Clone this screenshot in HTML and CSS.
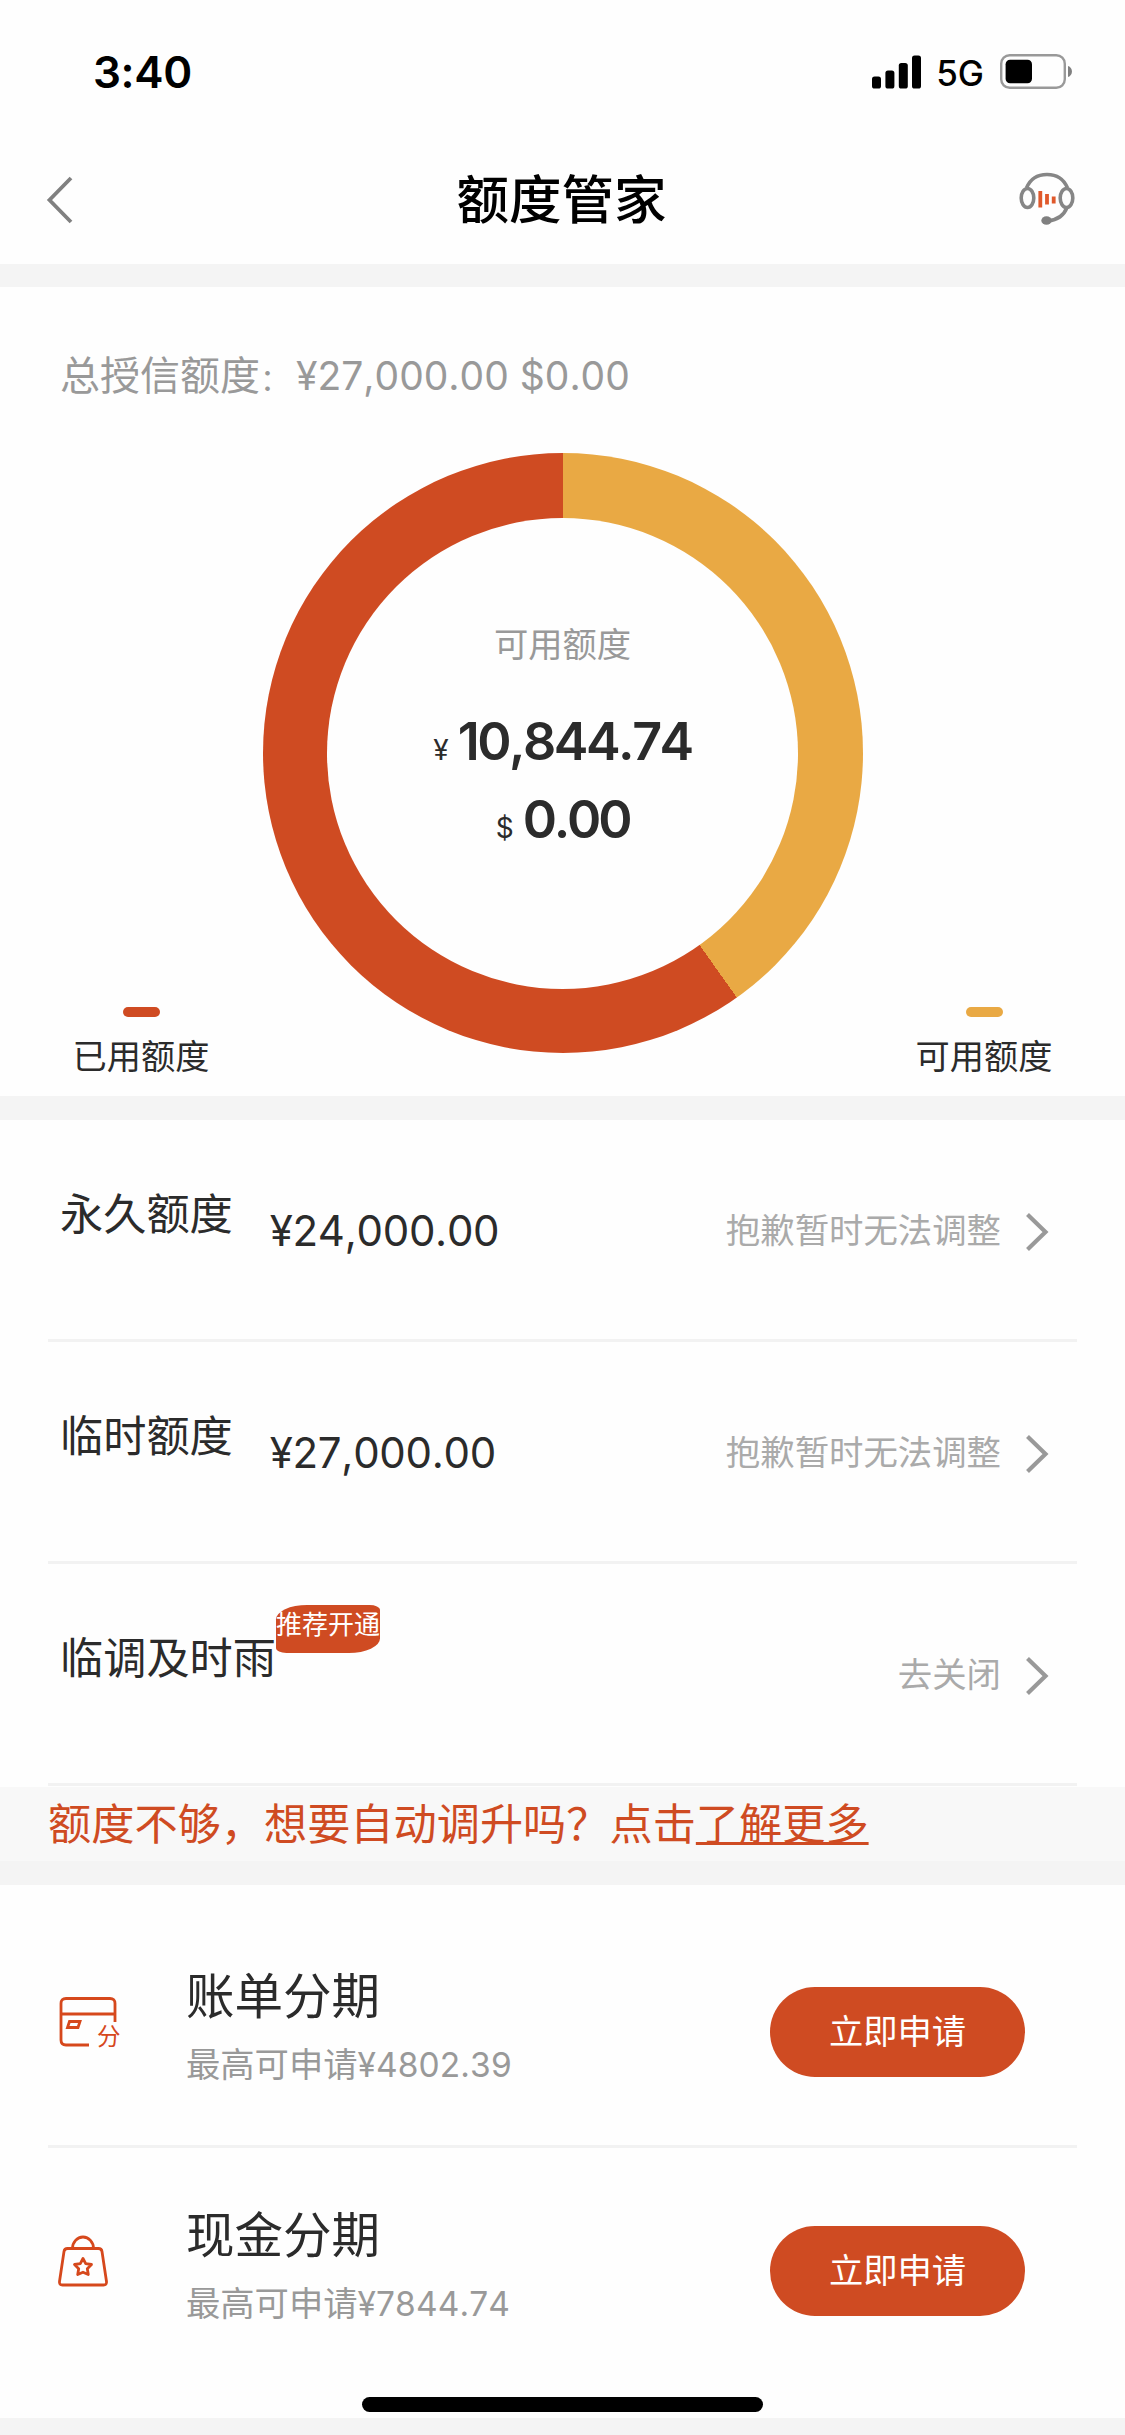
FILE: index.html
```html
<!DOCTYPE html>
<html lang="zh-CN">
<head>
<meta charset="utf-8">
<title>额度管家</title>
<link rel="stylesheet" href="styles.css">
</head>
<body>
<header class="header">
  <div class="status">
    <span class="status-time">3:40</span>
    <div class="status-right">
      <svg class="signal" width="49" height="34" viewBox="0 0 49 34"><rect x="0" y="21.5" width="9" height="12" rx="2.6"/><rect x="13.4" y="15.5" width="9" height="18" rx="2.6"/><rect x="26.8" y="8" width="9" height="25.5" rx="2.6"/><rect x="40" y="0.5" width="9" height="33" rx="2.6"/></svg>
      <span class="status-net">5G</span>
      <svg class="battery" width="73" height="36" viewBox="0 0 73 36"><rect x="1.2" y="1.2" width="63.6" height="32.6" rx="8.5" fill="none" stroke="#999" stroke-width="2.4"/><rect x="5.6" y="5.8" width="26.4" height="23.4" rx="4.5"/><path d="M68 12c5.3 1.6 5.3 9.4 0 11z" fill="#808080"/></svg>
    </div>
  </div>
  <nav class="nav">
    <svg class="nav-back" width="28" height="48" viewBox="0 0 28 48"><path d="M26 2L4.500 24l21.500 22" fill="none" stroke="#808080" stroke-width="3.800"/></svg>
    <h1 class="nav-title">额度管家</h1>
    <svg class="nav-service" width="56" height="54" viewBox="0 0 56 54" fill="none" stroke="#868686" stroke-width="3.600"><path d="M7.500 16C11 7.500 18.500 2.500 28 2.500s17 5 20.500 13.500"/><ellipse cx="8.500" cy="26" rx="6.300" ry="9.500"/><ellipse cx="47.500" cy="26" rx="6.300" ry="9.500"/><path d="M48 35.500C45 43 38 48 29 48.800"/><ellipse cx="27.500" cy="48.500" rx="5.200" ry="4.300" fill="#808080" stroke="none"/><path d="M21.300 19v16.500M28 22v10.500M34.700 24.500v7" stroke="#e0592b" stroke-width="3.800"/></svg>
  </nav>
</header>

<section class="overview">
  <p class="overview-total">总授信额度<span class="overview-colon">：</span><span class="overview-sum">¥27,000.00 $0.00</span></p>
  <div class="overview-chart">
    <div class="legend">
      <i class="legend-mark legend-mark-used"></i>
      <span>已用额度</span>
    </div>
    <div class="donut">
      <div class="donut-hole">
        <span class="donut-label">可用额度</span>
        <p class="amount"><span class="amount-unit">¥</span><b class="amount-value amount-cny">10,844.74</b></p>
        <p class="amount"><span class="amount-unit">$</span><b class="amount-value amount-usd">0.00</b></p>
      </div>
    </div>
    <div class="legend">
      <i class="legend-mark legend-mark-free"></i>
      <span>可用额度</span>
    </div>
  </div>
</section>

<section class="limits">
  <div class="limit">
    <span class="limit-name">永久额度</span>
    <span class="limit-value">¥24,000.00</span>
    <span class="limit-action">抱歉暂时无法调整</span>
    <svg class="chevron" width="24" height="40" viewBox="0 0 24 40"><path d="M2.500 2.500L20.500 20l-18 17.500"/></svg>
  </div>
  <div class="limit">
    <span class="limit-name">临时额度</span>
    <span class="limit-value">¥27,000.00</span>
    <span class="limit-action">抱歉暂时无法调整</span>
    <svg class="chevron" width="24" height="40" viewBox="0 0 24 40"><path d="M2.500 2.500L20.500 20l-18 17.500"/></svg>
  </div>
  <div class="limit">
    <span class="limit-name">临调及时雨<em class="badge">推荐开通</em></span>
    <span class="limit-action">去关闭</span>
    <svg class="chevron" width="24" height="40" viewBox="0 0 24 40"><path d="M2.500 2.500L20.500 20l-18 17.500"/></svg>
  </div>
</section>

<p class="notice">额度不够，想要自动调升吗？点击<a class="notice-link">了解更多</a></p>

<section class="products">
  <article class="product">
    <svg class="product-icon" width="62" height="52" viewBox="0 0 62 52"><path d="M56 26V7.500q0-5-5-5H7q-5 0-5 5v36.500q0 5 5 5h23M2 18h54"/><path d="M10.500 25.500h10.500l-2 6H8.500z"/><text class="product-glyph" x="38" y="48.500">分</text></svg>
    <div class="product-info">
      <h2 class="product-name">账单分期</h2>
      <p class="product-note">最高可申请<span class="product-sum">¥4802.39</span></p>
    </div>
    <button class="apply">立即申请</button>
  </article>
  <article class="product">
    <svg class="product-icon" width="62" height="52" viewBox="0 0 62 52"><path d="M8.500 13.500h31q3 0 3.500 3l4.500 30q.5 3.500-3 3.500h-41q-3.500 0-3-3.500l4.500-30q.5-3 3.500-3z"/><path d="M13.500 13.500a10.500 11.500 0 0 1 21 0"/><path stroke-linejoin="round" d="M24 23.500l2.700 5.200 5.800.8-4.200 4.200 1 5.800-5.300-2.300-5.300 2.300 1-5.800-4.200-4.200 5.800-.8z"/></svg>
    <div class="product-info">
      <h2 class="product-name">现金分期</h2>
      <p class="product-note">最高可申请<span class="product-sum">¥7844.74</span></p>
    </div>
    <button class="apply">立即申请</button>
  </article>
  <div class="home-bar"></div>
</section>
</body>
</html>
```
FILE: styles.css
```css
* {
  box-sizing: border-box;
  margin: 0;
  padding: 0;
}

body {
  background: #f4f4f4;
  color: #2b2b2b;
  font-family: Inter, "Noto Sans CJK SC", sans-serif;
  font-kerning: none;
}

svg {
  display: block;
  flex: none;
  overflow: visible;
}

/* Status bar and navigation */
.header {
  height: 264px;
  background: #fefefe;
  color: #000;
}

.status {
  display: flex;
  justify-content: space-between;
  align-items: center;
  height: 143px;
  padding: 0 52px 0 93px;
}

.status-time {
  font-size: 44px;
  font-weight: 600;
  letter-spacing: -0.4px;
  line-height: 60px;
}

.status-right {
  display: flex;
  align-items: center;
}

.status-net {
  margin: 2px 16px 0 15px;
  font-size: 35px;
  font-weight: 500;
  line-height: 40px;
}

.nav {
  display: flex;
  align-items: center;
  justify-content: space-between;
  height: 113px;
  padding: 0 50px 0 45px;
}

.nav-title {
  padding-left: 31px;
  font-size: 52.500px;
  font-weight: 500;
  line-height: 72px;
}

.nav-service {
  margin-top: -1px;
}

/* Credit overview */
.overview {
  height: 809px;
  margin-top: 23px;
  padding: 61px 60px 0;
  background: #fefefe;
}

.overview-total {
  height: 56px;
  color: #999;
  font-size: 40px;
  line-height: 56px;
  white-space: nowrap;
}

.overview-colon {
  margin-right: 10px;
  font-size: 30px;
}

.overview-sum {
  margin-left: -4px;
  font-size: 39px;
}

.overview-chart {
  display: flex;
  justify-content: space-between;
  height: 626px;
  padding: 49px 0 0;
}

.legend {
  display: flex;
  flex-direction: column;
  align-items: center;
  gap: 16px;
  width: 162px;
  padding-top: 554px;
  font-size: 34.200px;
  line-height: 48px;
}

.legend-mark {
  flex: none;
  width: 37px;
  height: 10px;
  border-radius: 5px;
}

.legend-mark-used {
  background: #cf4b22;
}

.legend-mark-free {
  background: #e9a944;
}

.donut {
  display: grid;
  place-items: center;
  width: 600px;
  height: 600px;
  border-radius: 50%;
  background: conic-gradient(#e9a944 0 144.600deg, #cf4b22 144.600deg);
}

.donut-hole {
  display: flex;
  flex-direction: column;
  align-items: center;
  width: 471px;
  height: 471px;
  padding-top: 103px;
  border-radius: 50%;
  background: #fefefe;
}

.donut-label {
  margin-bottom: 34px;
  color: #999;
  font-size: 34.300px;
  line-height: 48px;
}

.amount {
  display: flex;
  align-items: baseline;
  gap: 9px;
  height: 78px;
  line-height: 78px;
}

.amount-unit {
  font-size: 28px;
}

.amount-value {
  font-size: 52px;
  font-weight: 600;
}

.amount-cny {
  letter-spacing: -2.500px;
}

.amount-usd {
  letter-spacing: -3.200px;
}

/* Limit rows */
.limits {
  height: 667px;
  margin-top: 24px;
  padding: 0 48px;
  background: #fefefe;
}

.limit {
  display: flex;
  align-items: center;
  height: 222px;
  padding: 0 28px 0 12px;
  border-bottom: 3px solid #f2f2f2;
}

.limit-name {
  position: relative;
  margin-bottom: 32px;
  font-size: 43.200px;
  line-height: 60px;
}

.limit-value {
  margin: 2px 0 0 37px;
  font-size: 42px;
  letter-spacing: -0.300px;
  line-height: 60px;
}

.limit-action {
  margin: 3px 24px 0 auto;
  color: #aaa;
  font-size: 34.400px;
  line-height: 48px;
}

.chevron {
  margin-top: 4px;
  fill: none;
  stroke: #999;
  stroke-width: 4.200;
}

.badge {
  position: absolute;
  top: -23px;
  left: 216px;
  width: 104px;
  height: 48px;
  border-radius: 30% 10%;
  background: #cf4b22;
  color: #fff;
  font-size: 26px;
  font-style: normal;
  line-height: 40px;
  white-space: nowrap;
}

.notice {
  height: 74px;
  padding-left: 48px;
  background: #f8f8f8;
  color: #cf4b22;
  font-size: 43.200px;
  line-height: 74px;
}

.notice-link {
  text-decoration: underline;
  text-decoration-thickness: 3px;
  text-decoration-skip-ink: none;
  text-underline-offset: 2px;
}

/* Instalment products */
.products {
  height: 533px;
  margin-top: 24px;
  padding: 21px 48px 0;
  background: #fefefe;
}

.product {
  display: flex;
  align-items: center;
  height: 239px;
  padding: 0 52px 0 11px;
}

.product + .product {
  height: 237px;
  border-top: 3px solid #f2f2f2;
}

.product-icon {
  margin-top: -8px;
  fill: none;
  stroke: #d6481c;
  stroke-width: 2.800;
}

.product-glyph {
  fill: #d6481c;
  stroke: none;
  font-size: 23.500px;
}

.product-info {
  flex: 1;
  padding-left: 65px;
}

.product-name {
  font-size: 48.500px;
  font-weight: 400;
  line-height: 68px;
}

.product-note {
  margin-top: 10px;
  color: #999;
  font-size: 34.300px;
  line-height: 48px;
}

.product-sum {
  font-size: 33.500px;
  letter-spacing: 0.100px;
}

.apply {
  width: 255px;
  height: 90px;
  margin-top: 12px;
  border: 0;
  border-radius: 45px;
  background: #cf4b22;
  color: #fff;
  font: 34.300px/86px Inter, "Noto Sans CJK SC", sans-serif;
}

.home-bar {
  width: 401px;
  height: 15px;
  margin: 15px auto 0;
  border-radius: 8px;
  background: #000;
}
```
